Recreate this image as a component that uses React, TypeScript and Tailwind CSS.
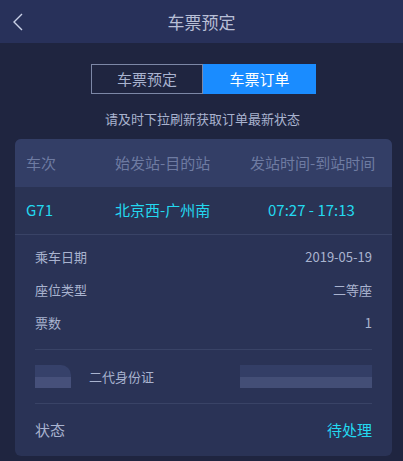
import React from 'react';

const FONT = { fontFamily: '"Noto Sans CJK SC", "Liberation Sans", sans-serif' };

const DetailRow: React.FC<{ label: string; value: string }> = ({ label, value }) => (
  <div className="flex items-center justify-between h-[33px] text-[13px]">
    <span className="text-[#a9b3cf]">{label}</span>
    <span className="text-[#a9b3cf]">{value}</span>
  </div>
);

const App: React.FC = () => {
  return (
    <div className="w-[403px] h-[461px] bg-[#1f2540] overflow-hidden" style={FONT}>
      {/* Top bar */}
      <header className="h-[43px] bg-[#28315a] flex items-center relative">
        <button className="absolute left-[12px] top-[12px] text-[#c9d0e6]">
          <svg width="12" height="20" viewBox="0 0 12 20" fill="none">
            <path d="M10 2 L2 10 L10 18" stroke="currentColor" strokeWidth="1.4" />
          </svg>
        </button>
        <h1 className="flex-1 text-center text-[17px] text-[#b8bfd6] leading-none">车票预定</h1>
      </header>

      {/* Segment */}
      <div className="flex pl-[91px] mt-[21px]">
        <div className="flex h-[30px]">
          <div className="w-[112px] border border-[#7c87a6] flex items-center justify-center text-[15px] text-[#a9b3cf]">
            车票预定
          </div>
          <div className="w-[113px] bg-[#1a8cff] flex items-center justify-center text-[15px] text-white">
            车票订单
          </div>
        </div>
      </div>

      <p className="text-center text-[13px] text-[#a9b3cf] mt-[16px] leading-[18px] pl-[2px]">请及时下拉刷新获取订单最新状态</p>

      {/* Card */}
      <div className="ml-[15px] mr-[11px] mt-[11px] rounded-[6px] overflow-hidden bg-[#2a3356]">
        <div className="h-[48px] bg-[#333e66] flex items-center text-[15px] text-[#6e7ba2]">
          <span className="w-[100px] pl-[11px]">车次</span>
          <span className="w-[135px]">始发站-目的站</span>
          <span className="flex-1">发站时间-到站时间</span>
        </div>
        <div className="h-[48px] bg-[#2a3354] flex items-center text-[15px] text-[#23d9f0] border-b border-[#394366]">
          <span className="w-[100px] pl-[11px]">G71</span>
          <span className="w-[153px]">北京西-广州南</span>
          <span className="flex-1">07:27 - 17:13</span>
        </div>
        <div className="px-[20px] pt-[5px]">
          <DetailRow label="乘车日期" value="2019-05-19" />
          <DetailRow label="座位类型" value="二等座" />
          <DetailRow label="票数" value="1" />
          <div className="h-[11px] border-b border-[#394366]" />
          <div className="h-[54px] flex items-center border-b border-[#394366] text-[13px] text-[#a9b3cf]">
            <div className="w-[36px] h-[23px] flex flex-col">
              <div className="flex-1 bg-[#36416a] rounded-tr-[10px]" />
              <div className="flex-1 bg-[#46507a]" />
            </div>
            <span className="ml-[18px]">二代身份证</span>
            <div className="ml-auto w-[132px] h-[23px] flex flex-col">
              <div className="flex-1 bg-[#333e66]" />
              <div className="flex-1 bg-[#434e76]" />
            </div>
          </div>
          <div className="h-[52px] flex items-center justify-between text-[15px]">
            <span className="text-[#a9b3cf]">状态</span>
            <span className="text-[#23d9f0]">待处理</span>
          </div>
        </div>
      </div>
    </div>
  );
};

export default App;
